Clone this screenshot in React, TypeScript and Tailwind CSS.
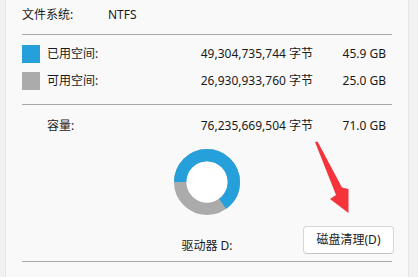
import React from 'react';

const usedBytes = 49304735744;
const totalBytes = 76235669504;

const Donut = () => {
  const r = 26.75;
  const c = 2 * Math.PI * r;
  const used = (usedBytes / totalBytes) * c;
  return (
    <svg width="66" height="66" viewBox="0 0 66 66">
      <circle cx="33" cy="33" r={r} fill="none" stroke="#ababab" strokeWidth="12.5" />
      <circle
        cx="33"
        cy="33"
        r={r}
        fill="none"
        stroke="#26a0da"
        strokeWidth="12.5"
        strokeDasharray={`${used} ${c}`}
        transform="rotate(180 33 33)"
      />
      <circle cx="33" cy="33" r="20.5" fill="#ffffff" />
    </svg>
  );
};

const SpaceRow = ({ color, label, bytes, gb }: { color: string; label: string; bytes: string; gb: string }) => (
  <div className="flex items-center h-[18px]">
    <div className="w-[18px] h-[18px] shrink-0" style={{ backgroundColor: color }} />
    <span className="ml-[7px] flex-1">{label}</span>
    <span className="w-[140px] text-right">{bytes}</span>
    <span className="w-[73px] text-right mr-[6px]">{gb}</span>
  </div>
);

const App = () => {
  return (
    <div
      className="relative flex w-[418px] h-[277px] overflow-hidden bg-[#f9f9f9] text-[12px] text-[#1a1a1a]"
      style={{ fontFamily: '"Noto Sans", "Noto Sans CJK SC", sans-serif' }}
    >
      <div className="w-[6px] shrink-0 bg-[#f1f1f1] border-r border-[#e6e6e6]" />

      <div className="flex-1 px-[16px]">
        {/* File system */}
        <div className="flex items-center h-[30px]">
          <span className="w-[86px]">文件系统:</span>
          <span>NTFS</span>
        </div>
        <div className="mt-[4px] h-px bg-[#a6a6a6]" />

        {/* Used / free */}
        <div className="mt-[10px]">
          <SpaceRow color="#26a0da" label="已用空间:" bytes="49,304,735,744 字节" gb="45.9 GB" />
        </div>
        <div className="mt-[9px]">
          <SpaceRow color="#ababab" label="可用空间:" bytes="26,930,933,760 字节" gb="25.0 GB" />
        </div>
        <div className="mt-[14px] h-px bg-[#a6a6a6]" />

        {/* Capacity */}
        <div className="mt-[12px] flex items-center h-[18px]">
          <span className="ml-[25px] flex-1">容量:</span>
          <span className="w-[140px] text-right">76,235,669,504 字节</span>
          <span className="w-[73px] text-right mr-[6px]">71.0 GB</span>
        </div>

        {/* Chart */}
        <div className="mt-[14px] flex justify-center h-[66px]">
          <Donut />
        </div>

        {/* Drive + cleanup */}
        <div className="mt-[11px] grid grid-cols-[1fr_auto_1fr] items-end h-[28px]">
          <div />
          <span className="leading-[17px]">驱动器 D:</span>
          <div className="flex justify-end -mr-[2px]">
            <button className="w-[91px] h-[28px] bg-white border border-[#d6d6d6] border-b-[#c4c4c4] rounded-[4px] text-[12px] text-[#1a1a1a]">
              磁盘清理(D)
            </button>
          </div>
        </div>
        <div className="mt-[7px] h-px bg-[#a6a6a6]" />
      </div>

      <div className="w-[10px] shrink-0 bg-[#f1f1f1] border-l border-[#e6e6e6]" />

      {/* Annotation arrow */}
      <svg className="absolute inset-0 pointer-events-none" width="418" height="277" viewBox="0 0 418 277">
        <polygon points="315,142 317.5,141.5 342,187.5 348.5,189 348.5,213 330,199 336,195" fill="#f4333b" />
      </svg>
    </div>
  );
};

export default App;
